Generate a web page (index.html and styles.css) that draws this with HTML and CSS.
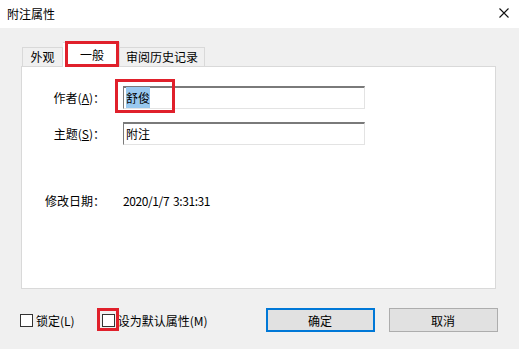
FILE: index.html
```html
<!DOCTYPE html>
<html lang="zh-CN">
<head>
    <meta charset="UTF-8">
    <meta name="viewport" content="width=device-width, initial-scale=1.0">
    <title>附注属性</title>
    <link rel="stylesheet" href="styles.css">
</head>
<body>

    <div class="dialog">
        <div class="titlebar">
            <span>附注属性</span>
            <svg class="close" width="10" height="10" viewBox="0 0 10 10">
                <path d="M0.5 0.5 L9.5 9.5 M9.5 0.5 L0.5 9.5" stroke="#111" stroke-width="1.1" fill="none"/>
            </svg>
        </div>

        <div class="content">
            <div class="tabs">
                <div class="tab tab-look">外观</div>
                <div class="tab tab-general active">一般<span class="mark mark-tab"></span></div>
                <div class="tab tab-history">审阅历史记录</div>
            </div>

            <div class="panel">
                <div class="form">
                    <label class="label">作者(<u>A</u>)：</label>
                    <div class="field">
                        <span class="selected">舒俊</span>
                        <span class="mark mark-field"></span>
                    </div>

                    <label class="label">主题(<u>S</u>)：</label>
                    <div class="field">附注</div>

                    <span class="label date-label">修改日期：</span>
                    <span class="value date-label">2020/1/7 3:31:31</span>
                </div>
            </div>

            <div class="footer">
                <label class="check"><span class="box"></span>锁定(L)</label>
                <label class="check second"><span class="box"><span class="mark mark-box"></span></span>设为默认属性(M)</label>
                <div class="buttons">
                    <button class="btn primary">确定</button>
                    <button class="btn">取消</button>
                </div>
            </div>
        </div>
    </div>

</body>
</html>
```

FILE: styles.css
```css
body {
    margin: 0;
    font-family: "Noto Sans CJK SC", "Noto Sans", sans-serif;
    font-size: 12px;
    color: #000;
    background-color: #f0f0f0;
}
.dialog {
    width: 519px;
    height: 349px;
    background-color: #f0f0f0;
    overflow: hidden;
}
.titlebar {
    height: 28px;
    background-color: #fff;
    display: flex;
    align-items: center;
    justify-content: space-between;
    padding: 0 10px 2px 7px;
    box-sizing: border-box;
}
.close {
    margin-right: 0;
}
.content {
    padding: 14px 0 0 21px;
}
.tabs {
    display: flex;
    align-items: flex-end;
    height: 24px;
    padding-left: 1px;
    position: relative;
    z-index: 1;
}
.tab {
    box-sizing: border-box;
    flex-shrink: 0;
    height: 19px;
    line-height: 18px;
    text-align: center;
    border: 1px solid #d9d9d9;
    border-bottom: none;
    background-color: #f0f0f0;
}
.tab-look {
    width: 41px;
}
.tab-general {
    width: 57px;
}
.tab-history {
    width: 85px;
    border-left: none;
}
.tab.active {
    position: relative;
    height: 25px;
    line-height: 23px;
    margin-bottom: -1px;
    border-left: none;
    padding-left: 2px;
    background-color: #fff;
    z-index: 2;
}
.mark {
    position: absolute;
    border: 3px solid #e0202b;
    pointer-events: none;
}
.mark-tab {
    left: 2px;
    top: -2px;
    right: 0;
    bottom: 0;
}
.panel {
    width: 473px;
    height: 221px;
    background-color: #fff;
    border: 1px solid #d9d9d9;
}
.form {
    display: grid;
    grid-template-columns: 63px 242px;
    column-gap: 18px;
    row-gap: 13px;
    padding: 19px 0 0 20px;
    align-items: center;
}
.label {
    text-align: right;
    white-space: nowrap;
}
.field {
    position: relative;
    height: 20px;
    line-height: 20px;
    border-top: 2px solid #7a7a7a;
    border-left: 1px solid #7a7a7a;
    border-right: 1px solid #e3e3e3;
    border-bottom: 1px solid #e3e3e3;
    padding-left: 2px;
}
.selected {
    background-color: #99c9ef;
    padding: 2px 0;
}
.mark-field {
    left: -9px;
    top: -9px;
    width: 54px;
    height: 28px;
}
.date-label {
    margin-top: 34px;
}
.value {
    white-space: nowrap;
    letter-spacing: -0.4px;
    word-spacing: 1.5px;
}
.footer {
    display: flex;
    align-items: center;
    margin-top: 19px;
    height: 24px;
}
.check {
    display: flex;
    align-items: center;
    margin-left: -1px;
}
.check.second {
    margin-left: 27px;
}
.box {
    position: relative;
    width: 11px;
    height: 11px;
    border: 1px solid #333;
    background-color: #fff;
    margin-right: 3px;
}
.mark-box {
    left: -6px;
    top: -7px;
    width: 16px;
    height: 17px;
}
.buttons {
    display: flex;
    gap: 14px;
    margin-left: 58px;
}
.btn {
    width: 109px;
    height: 24px;
    margin: 0;
    font-family: inherit;
    font-size: 12px;
    color: #000;
    background-color: #e1e1e1;
    border: 1px solid #adadad;
    padding: 0;
}
.btn.primary {
    border: 2px solid #0078d7;
}
```
